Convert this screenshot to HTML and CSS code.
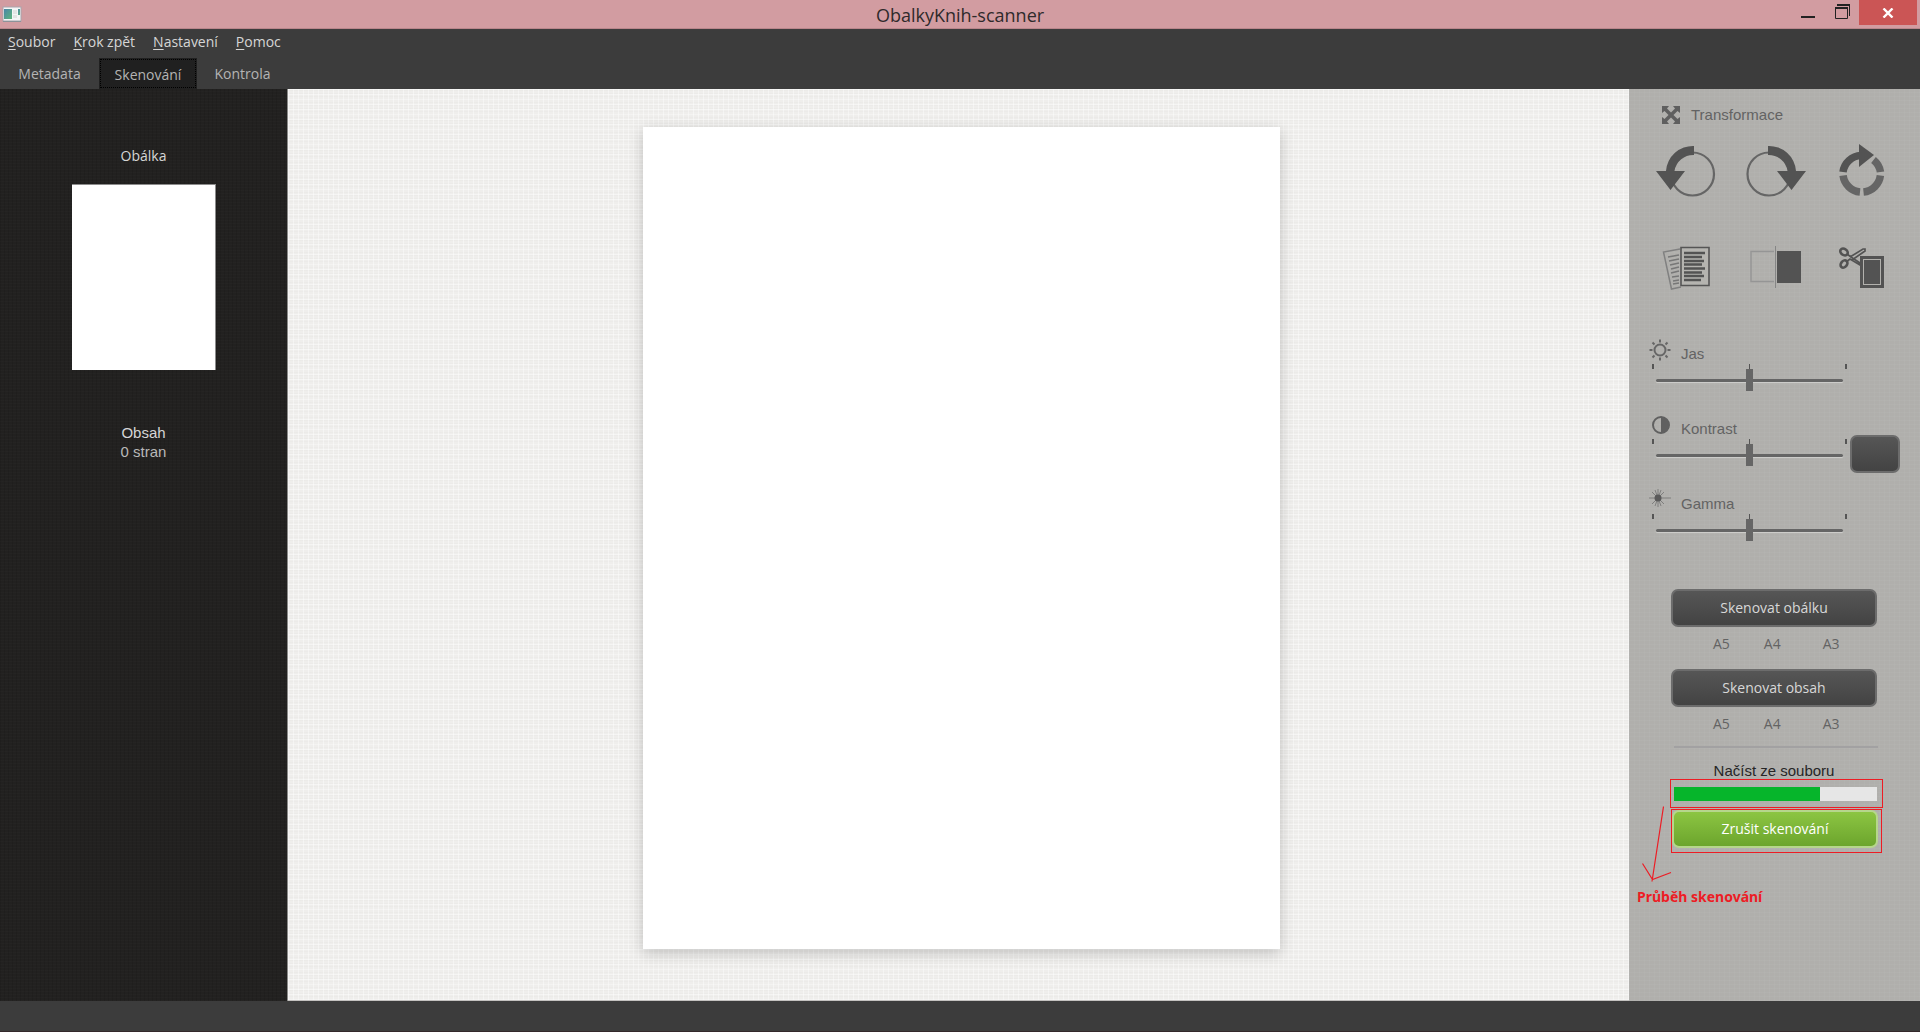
FILE: index.html
```html
<!DOCTYPE html>
<html lang="cs">
<head>
<meta charset="utf-8">
<title>ObalkyKnih-scanner</title>
<link rel="stylesheet" href="styles.css">
</head>
<body>
<div class="app">
  <header class="titlebar">
    <svg class="app-icon" width="20" height="17" viewBox="0 0 20 17" aria-hidden="true">
      <defs><linearGradient id="ai" x1="0" y1="0" x2="1" y2="1"><stop offset="0" stop-color="#4a86a8"/><stop offset="1" stop-color="#5fb57c"/></linearGradient></defs>
      <rect x="1" y="1" width="18" height="14" fill="#f4f6f6" stroke="#a9a4ac"/>
      <path d="M1 15.500H19" stroke="#8d9399"/>
      <rect x="2" y="3" width="8" height="10" fill="url(#ai)"/>
      <path d="M11 4h4v4h-4zM11 9h4v3h-4z" fill="#e3e5e4"/>
      <rect x="16" y="3" width="2" height="6" fill="url(#ai)"/>
    </svg>
    <h1 class="title">ObalkyKnih-scanner</h1>
    <div class="window-controls">
      <button type="button" class="win-btn" aria-label="Minimalizovat"><svg width="14" height="20" viewBox="0 0 14 20"><path d="M0 17h14" stroke="#222" stroke-width="2"/></svg></button>
      <button type="button" class="win-btn" aria-label="Obnovit"><svg width="15" height="20" viewBox="0 0 15 20"><path d="M2 5h13M0 8h13" stroke="#222" stroke-width="2"/><path d="M14.500 4v12M.5 8v10.500h12V8" fill="none" stroke="#222"/></svg></button>
      <button type="button" class="win-btn win-close" aria-label="Zavřít"><svg width="12" height="10" viewBox="0 0 12 10"><path d="M1.500.5l9 9M10.500.5l-9 9" stroke="#fff" stroke-width="2.400"/></svg></button>
    </div>
  </header>

  <nav class="menubar">
    <button type="button"><u>S</u>oubor</button>
    <button type="button"><u>K</u>rok zpět</button>
    <button type="button"><u>N</u>astavení</button>
    <button type="button"><u>P</u>omoc</button>
  </nav>

  <div class="tabs" role="tablist">
    <button type="button" role="tab" class="tab">Metadata</button>
    <button type="button" role="tab" class="tab tab-active" aria-selected="true">Skenování</button>
    <button type="button" role="tab" class="tab">Kontrola</button>
  </div>

  <div class="workspace">
    <aside class="pages">
      <h2 class="pages-cover">Obálka</h2>
      <button type="button" class="thumb" aria-label="Náhled obálky"></button>
      <h2 class="pages-contents">Obsah</h2>
      <p class="pages-count">0 stran</p>
    </aside>

    <main class="canvas"><div class="paper"></div></main>

    <aside class="tools">
      <h2 class="tools-title">
        <svg width="18" height="18" viewBox="0 0 18 18" aria-hidden="true"><path d="M0 0h7L5 2.500l4 4 4-4L11 0h7v7l-2.500-2-4 4 4 4 2.500-2v7h-7l2-2.500-4-4-4 4L7 18H0v-7l2.500 2 4-4-4-4L0 7z" fill="#5f5f5f"/></svg>
        Transformace
      </h2>
      <div class="icon-grid">
        <button type="button" aria-label="Otočit doleva">
          <svg width="60" height="56" viewBox="0 0 60 56"><circle cx="36.500" cy="31" r="21.500" fill="none" stroke="#656565" stroke-width="2.200"/><path d="M38 3v9A19 19 0 0 0 18.500 28H29L14.500 47 0 28h10A27 27 0 0 1 38 3z" fill="#535353"/></svg>
        </button>
        <button type="button" aria-label="Otočit doprava">
          <svg width="60" height="56" viewBox="0 0 60 56"><circle cx="23" cy="31" r="21.500" fill="none" stroke="#656565" stroke-width="2.200"/><path d="M22 3v9A19 19 0 0 1 41.500 28H31l14.500 19L60 28H50A27 27 0 0 0 22 3z" fill="#535353"/></svg>
        </button>
        <button type="button" aria-label="Otočit o 180 stupňů">
          <svg width="46" height="56" viewBox="0 0 46 56"><g fill="none" stroke="#656565" stroke-width="7.500"><path d="M34.500 17A19 19 0 0 1 41.500 29"/><path d="M41.400 32.500A19 19 0 0 1 24.500 49"/><path d="M21 49A19 19 0 0 1 4.100 32.500"/></g><path d="M4 29A19 19 0 0 1 22 12.500" fill="none" stroke="#535353" stroke-width="7.500"/><path d="M20 1l15 11-15 12z" fill="#535353"/></svg>
        </button>
        <button type="button" aria-label="Vyrovnat stránku">
          <svg width="48" height="44" viewBox="0 0 48 44"><path d="M18 3L1.500 6l8 37L19 41" fill="none" stroke="#808080" stroke-width="1.500"/><path d="M6 11l11-2M7 15l10-2M8 19l9-2M9 23l8-2M9 27l8-2M10 31l7-1M11 35l6-1M11 38l6-1" stroke="#777" stroke-width="1.700"/><path d="M19 1.500h28v38H19z" fill="#b5b4b0" stroke="#555" stroke-width="1.600"/><path d="M22 7h21M22 11h18M22 15h20M22 18.500h18M22 22.500h21M22 26.500h18M22 30h20M22 34h17" stroke="#535353" stroke-width="2.600"/></svg>
        </button>
        <button type="button" aria-label="Rozdělit stránku">
          <svg width="52" height="44" viewBox="0 0 52 44"><path d="M24 5.500H1v30h23" fill="none" stroke="#959595" stroke-width="1.400"/><path d="M25.500 0v42" stroke="#858585"/><path d="M27 5h24v32H27z" fill="#535353"/></svg>
        </button>
        <button type="button" aria-label="Oříznout">
          <svg width="46" height="44" viewBox="0 0 46 44"><g fill="none" stroke="#535353"><ellipse cx="5" cy="6" rx="4" ry="3" stroke-width="2.600" transform="rotate(35 5 6)"/><ellipse cx="5" cy="18" rx="4" ry="3" stroke-width="2.600" transform="rotate(-50 5 18)"/><path d="M8 8l4 3 9 6v2l-10-6-4 3M11 11L24 3h2v2l-13 9" stroke-width="1.700"/></g><path d="M22.500 11.500h21v29h-21z" fill="#b2b1ad" stroke="#535353" stroke-width="3"/><path d="M25 14h16v24H25z" fill="#535353"/></svg>
        </button>
      </div>

      <div class="sliders">
        <div class="slider">
          <label class="slider-head" for="brightness">
            <svg width="22" height="22" viewBox="0 0 22 22" aria-hidden="true"><circle cx="11" cy="11" r="5.500" fill="none" stroke="#666" stroke-width="2"/><path d="M11 .5v3M11 18.500v3M.5 11h3M18.500 11h3M3.500 3.500l2 2M16.500 16.500l2 2M3.500 18.500l2-2M16.500 5.500l2-2" stroke="#666" stroke-width="2"/></svg>Jas
          </label>
          <div class="slider-scale"><input type="range" id="brightness" min="-100" max="100" value="0"></div>
        </div>
        <div class="slider">
          <label class="slider-head" for="contrast">
            <svg width="22" height="22" viewBox="0 0 22 22" aria-hidden="true"><circle cx="12" cy="11" r="8" fill="none" stroke="#606060" stroke-width="2"/><path d="M12 3a8 8 0 0 1 0 16z" fill="#606060"/></svg>Kontrast
          </label>
          <div class="slider-scale"><input type="range" id="contrast" min="-100" max="100" value="0"></div>
        </div>
        <button type="button" class="btn btn-small" aria-label="Obnovit hodnoty"></button>
        <div class="slider">
          <label class="slider-head" for="gamma">
            <svg width="22" height="22" viewBox="0 0 22 22" aria-hidden="true"><path d="M9 0v18M0 9h22M3 3l12 12M3 15L15 3M6 1l6 16M6 17l6-16" stroke="#6b6b6b" stroke-opacity=".7"/><circle cx="9" cy="9" r="3.500" fill="#5a5a5a"/></svg>Gamma
          </label>
          <div class="slider-scale"><input type="range" id="gamma" min="-100" max="100" value="0"></div>
        </div>
      </div>

      <section class="scan">
        <button type="button" class="btn">Skenovat obálku</button>
        <div class="sizes"><button type="button">A5</button><button type="button">A4</button><button type="button">A3</button></div>
        <button type="button" class="btn">Skenovat obsah</button>
        <div class="sizes"><button type="button">A5</button><button type="button">A4</button><button type="button">A3</button></div>
        <hr>
        <button type="button" class="load-file">Načíst ze souboru</button>
        <div class="mark mark-progress"><progress aria-label="Průběh skenování" value="72" max="100"></progress></div>
        <div class="mark mark-cancel"><button type="button" class="btn btn-cancel">Zrušit skenování</button></div>
        <div class="note">
          <svg class="note-arrow" width="30" height="77" viewBox="0 0 30 77" aria-hidden="true"><path d="M21.500.5L10 75.500M.5 57.500L10.500 73.500 29 66.500" fill="none" stroke="#ed1c24" stroke-width="1.200"/></svg>
          <strong>Průběh skenování</strong>
        </div>
      </section>
    </aside>
  </div>
  <footer class="statusbar"></footer>
</div>
</body>
</html>
```
FILE: styles.css
```css
* { box-sizing: border-box; }

body {
  margin: 0;
  font: 14px/20px "Open Sans", "Noto Sans", sans-serif;
  color: #d6d6d6;
}

h1, h2, p { margin: 0; font-size: inherit; font-weight: 400; }

button {
  padding: 0;
  border: 0;
  background: none;
  color: inherit;
  font: inherit;
}

svg { display: block; }

.app {
  display: flex;
  flex-direction: column;
  min-height: 100vh;
  background: #3c3c3c;
}

/* Window frame */
.titlebar {
  display: grid;
  grid-template-columns: 1fr auto 1fr;
  height: 29px;
  background: #d29ca1;
  border-bottom: 1px solid #b9868b;
}
.app-icon { margin: 6px 0 0 2px; }
.title { color: #2e2a2b; font-size: 18px; line-height: 30px; }
.window-controls { display: flex; justify-content: flex-end; gap: 20px; padding-right: 3px; }
.win-btn { display: flex; align-self: flex-start; }
.win-close {
  align-items: center;
  justify-content: center;
  width: 58px;
  height: 25px;
  margin-left: -11px;
  background: #cb5555;
}

/* Menu and tabs */
.menubar { display: flex; gap: 18px; height: 29px; padding: 3px 8px 6px; }
.menubar u { text-underline-offset: 2px; }
.tabs { display: flex; height: 31px; color: #b4b4b4; }
.tab { width: 91px; }
.tab:first-child { width: 99px; }
.tab-active {
  width: 98px;
  padding-top: 2px;
  background: #202020;
  outline: 1px dotted #000;
  outline-offset: -2px;
}

.workspace {
  display: grid;
  grid-template-columns: 288px 1fr 291px;
  flex: 1;
}

/* Page list */
.pages {
  display: flex;
  flex-direction: column;
  align-items: center;
  padding-top: 57px;
  border-right: 1px solid #8a8a88;
  background:
    repeating-linear-gradient(0deg, rgba(255,255,255,.012) 0 1px, transparent 1px 3px),
    repeating-linear-gradient(90deg, rgba(0,0,0,.1) 0 1px, transparent 1px 4px),
    #222120;
}
.thumb {
  width: 144px;
  height: 186px;
  margin: 18px 0 53px;
  background: #fff;
  border: solid #8c8c8c;
  border-width: 1px 1px 0 0;
}
.pages-contents, .pages-count { font: 15px/19px "Liberation Sans", Arial, sans-serif; }
.pages-count { color: #b8b8b8; }

/* Scanned page */
.canvas {
  display: flex;
  justify-content: center;
  padding: 38px 0 51px 5px;
  border-bottom: 1px solid #c4c2c0;
  background:
    repeating-linear-gradient(0deg, rgba(255,255,255,.4) 0 1px, transparent 1px 5px),
    repeating-linear-gradient(90deg, rgba(255,255,255,.4) 0 1px, transparent 1px 5px),
    repeating-linear-gradient(0deg, rgba(80,80,70,.02) 0 1px, transparent 1px 3px),
    #efeeec;
}
.paper {
  aspect-ratio: 637 / 822;
  background: #fff;
  box-shadow: 0 4px 14px rgba(0,0,0,.2);
}

/* Tool panel */
.tools {
  color: #636363;
  background:
    repeating-linear-gradient(0deg, rgba(255,255,255,.03) 0 1px, transparent 1px 4px),
    repeating-linear-gradient(90deg, rgba(255,255,255,.03) 0 1px, transparent 1px 5px),
    #b0afac;
}
.tools-title {
  display: flex;
  align-items: center;
  gap: 11px;
  padding: 16px 0 0 33px;
  font: 15px/20px "Liberation Sans", Arial, sans-serif;
}
.icon-grid {
  display: grid;
  grid-template-columns: 88px 92px 80px;
  grid-template-rows: 56px 44px;
  row-gap: 47px;
  justify-items: center;
  padding: 18px 0 0 13px;
}

.sliders {
  display: grid;
  grid-template-columns: 200px 50px;
  grid-auto-rows: 75px;
  column-gap: 1px;
  padding: 45px 0 0 20px;
}
.slider { grid-column: 1; }
.slider-head {
  display: flex;
  align-items: flex-end;
  gap: 10px;
  height: 29px;
  font: 15px/20px "Liberation Sans", Arial, sans-serif;
}
.slider-head svg { align-self: flex-start; margin-top: 4px; }
.slider-scale {
  width: 195px;
  margin-left: 3px;
  padding: 5px 4px 0;
  background:
    linear-gradient(#555, #555) 0 0 / 2px 5px no-repeat,
    linear-gradient(#555, #555) 50% 0 / 1px 5px no-repeat,
    linear-gradient(#555, #555) 100% 0 / 2px 5px no-repeat;
}
.slider input {
  display: block;
  width: 100%;
  height: 22px;
  margin: 0;
  appearance: none;
  background: none;
}
.slider input::-webkit-slider-runnable-track {
  height: 3px;
  border-radius: 2px;
  background: #656565;
  box-shadow: 0 1px 1px #d0d0ce;
}
.slider input::-webkit-slider-thumb {
  appearance: none;
  width: 7px;
  height: 22px;
  margin-top: -10px;
  background: #666;
}

.btn {
  width: 206px;
  height: 38px;
  border: 2px solid #6c6c6c;
  border-radius: 7px;
  background: linear-gradient(#575757, #424242);
  background-origin: border-box;
  color: #d8d8d8;
}
.btn-small { grid-column: 2; grid-row: 2; width: 50px; margin-top: 25px; }

.scan {
  display: flex;
  flex-direction: column;
  align-items: flex-start;
  padding: 29px 0 0 42px;
}
.sizes { display: flex; gap: 34px; height: 42px; padding: 7px 0 0 42px; }
.sizes button { height: 20px; }
.sizes button:last-child { margin-left: 8px; }
.scan hr {
  width: 204px;
  height: 2px;
  margin: -3px 0 15px 3px;
  border: 0;
  background: #a2a1a2;
}
.load-file {
  width: 206px;
  height: 16px;
  font: 15px/16px "Liberation Sans", Arial, sans-serif;
  color: #262626;
}
.mark { border: 1px solid #ed1c24; }
.mark-progress { width: 213px; margin-left: -1px; padding: 7px 3px 6px; }
.mark-cancel { width: 211px; height: 44px; margin-top: 1px; }
progress {
  display: block;
  width: 203px;
  height: 14px;
  appearance: none;
}
progress::-webkit-progress-bar { background: #e6e6e6; }
progress::-webkit-progress-value { background: #06b52b; }
.btn-cancel {
  border-color: #b6d68c;
  background: linear-gradient(#8cc542, #6ca52d);
  color: #fff;
}

/* Hand-drawn note pointing at the progress bar */
.note { position: relative; margin-left: -34px; padding-top: 34px; color: #ed1c24; }
.note-arrow { position: absolute; left: 5px; top: -47px; }
.note strong { font-family: "Noto Sans", "Open Sans", sans-serif; }
.statusbar { height: 31px; border-bottom: 1px solid #33292b; }
```
